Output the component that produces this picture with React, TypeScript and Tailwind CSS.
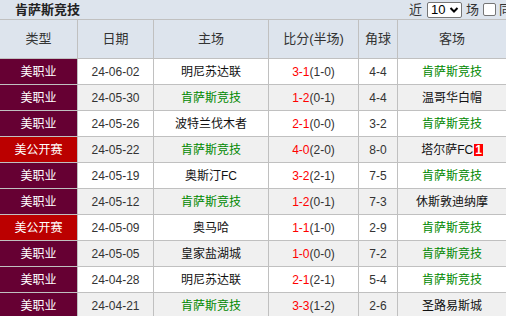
import React from "react";

type Row = {
  type: string;
  date: string;
  home: string;
  score: string;
  half: string;
  corner: string;
  away: string;
  mark?: string;
};

const TEAM = "肯萨斯竞技";

const rows: Row[] = [
  { type: "美职业", date: "24-06-02", home: "明尼苏达联", score: "3-1", half: "(1-0)", corner: "4-4", away: TEAM },
  { type: "美职业", date: "24-05-30", home: TEAM, score: "1-2", half: "(0-1)", corner: "4-4", away: "温哥华白帽" },
  { type: "美职业", date: "24-05-26", home: "波特兰伐木者", score: "2-1", half: "(0-0)", corner: "3-2", away: TEAM },
  { type: "美公开赛", date: "24-05-22", home: TEAM, score: "4-0", half: "(2-0)", corner: "8-0", away: "塔尔萨FC", mark: "1" },
  { type: "美职业", date: "24-05-19", home: "奥斯汀FC", score: "3-2", half: "(2-1)", corner: "7-5", away: TEAM },
  { type: "美职业", date: "24-05-12", home: TEAM, score: "1-2", half: "(0-1)", corner: "7-3", away: "休斯敦迪纳摩" },
  { type: "美公开赛", date: "24-05-09", home: "奥马哈", score: "1-1", half: "(1-0)", corner: "2-9", away: TEAM },
  { type: "美职业", date: "24-05-05", home: "皇家盐湖城", score: "1-0", half: "(0-0)", corner: "7-2", away: TEAM },
  { type: "美职业", date: "24-04-28", home: "明尼苏达联", score: "2-1", half: "(2-1)", corner: "5-4", away: TEAM },
  { type: "美职业", date: "24-04-21", home: TEAM, score: "3-3", half: "(1-2)", corner: "2-6", away: "圣路易斯城" },
];

const font = { fontFamily: '"Liberation Sans", "Noto Sans CJK SC", sans-serif' };

function Team({ name, mark }: { name: string; mark?: string }) {
  return (
    <span className={name === TEAM ? "text-[#008800]" : "text-[#111]"}>
      {name}
      {mark && (
        <span className="inline-block bg-[#ff0000] text-white font-bold px-[1px] leading-[12px] ml-[1px]">{mark}</span>
      )}
    </span>
  );
}

export default function App() {
  return (
    <div className="w-[506px] h-[316px] overflow-hidden bg-white text-[12px] text-[#333]" style={font}>
      {/* title bar */}
      <div className="h-[20px] flex items-center justify-between bg-[#dde4ed] border-b border-[#c0c0c0] whitespace-nowrap">
        <div className="pl-[15px] font-bold text-[13px] text-[#222]">肯萨斯竞技</div>
        <div className="flex items-center text-[13px] text-[#333] -mr-[6px]">
          <span>近</span>
          <span className="ml-[5px] w-[35px] h-[16px] border border-[#767676] rounded-[2px] bg-white flex items-center justify-between pl-[3px] pr-[2px] text-[13px] text-black">
            10
            <svg width="10" height="8" viewBox="0 0 10 8">
              <path d="M1.5 2 L5 5.5 L8.5 2" stroke="#000" strokeWidth="2" fill="none" />
            </svg>
          </span>
          <span className="ml-[4px]">场</span>
          <span className="ml-[4px] w-[13px] h-[13px] border border-[#767676] rounded-[2px] bg-white inline-block" />
          <span className="ml-[3px]">同</span>
        </div>
      </div>
      {/* header */}
      <div className="flex h-[39px] bg-[#dde4ed] border-b border-[#c0c0c0] text-[13px] text-[#333]">
        <div className="w-[78px] border-r border-[#c0c0c0] flex items-center justify-center">类型</div>
        <div className="w-[76px] border-r border-[#c0c0c0] flex items-center justify-center">日期</div>
        <div className="w-[115px] border-r border-[#c0c0c0] flex items-center justify-center">主场</div>
        <div className="w-[90px] border-r border-[#c0c0c0] flex items-center justify-center">比分(半场)</div>
        <div className="w-[39px] border-r border-[#c0c0c0] flex items-center justify-center">角球</div>
        <div className="flex-1 flex items-center justify-center">客场</div>
      </div>
      {rows.map((r, i) => {
        const bg = i % 2 === 0 ? "bg-white" : "bg-[#f0f0f0]";
        const typeBg = r.type === "美公开赛" ? "bg-[#bb0000]" : "bg-[#660033]";
        return (
          <div key={i} className={`flex h-[26px] border-b border-[#c0c0c0] ${bg} whitespace-nowrap`}>
            <div className={`w-[78px] border-r border-[#c0c0c0] ${typeBg} text-white flex items-center justify-center`}>
              {r.type}
            </div>
            <div className="w-[76px] border-r border-[#c0c0c0] flex items-center justify-center text-[#333]">{r.date}</div>
            <div className="w-[115px] border-r border-[#c0c0c0] flex items-center justify-center">
              <Team name={r.home} />
            </div>
            <div className="w-[90px] border-r border-[#c0c0c0] flex items-center justify-center">
              <span className="text-[#ff0000]">{r.score}</span>
              <span className="text-[#333]">{r.half}</span>
            </div>
            <div className="w-[39px] border-r border-[#c0c0c0] flex items-center justify-center text-[#333]">{r.corner}</div>
            <div className="flex-1 flex items-center justify-center">
              <Team name={r.away} mark={r.mark} />
            </div>
          </div>
        );
      })}
    </div>
  );
}
